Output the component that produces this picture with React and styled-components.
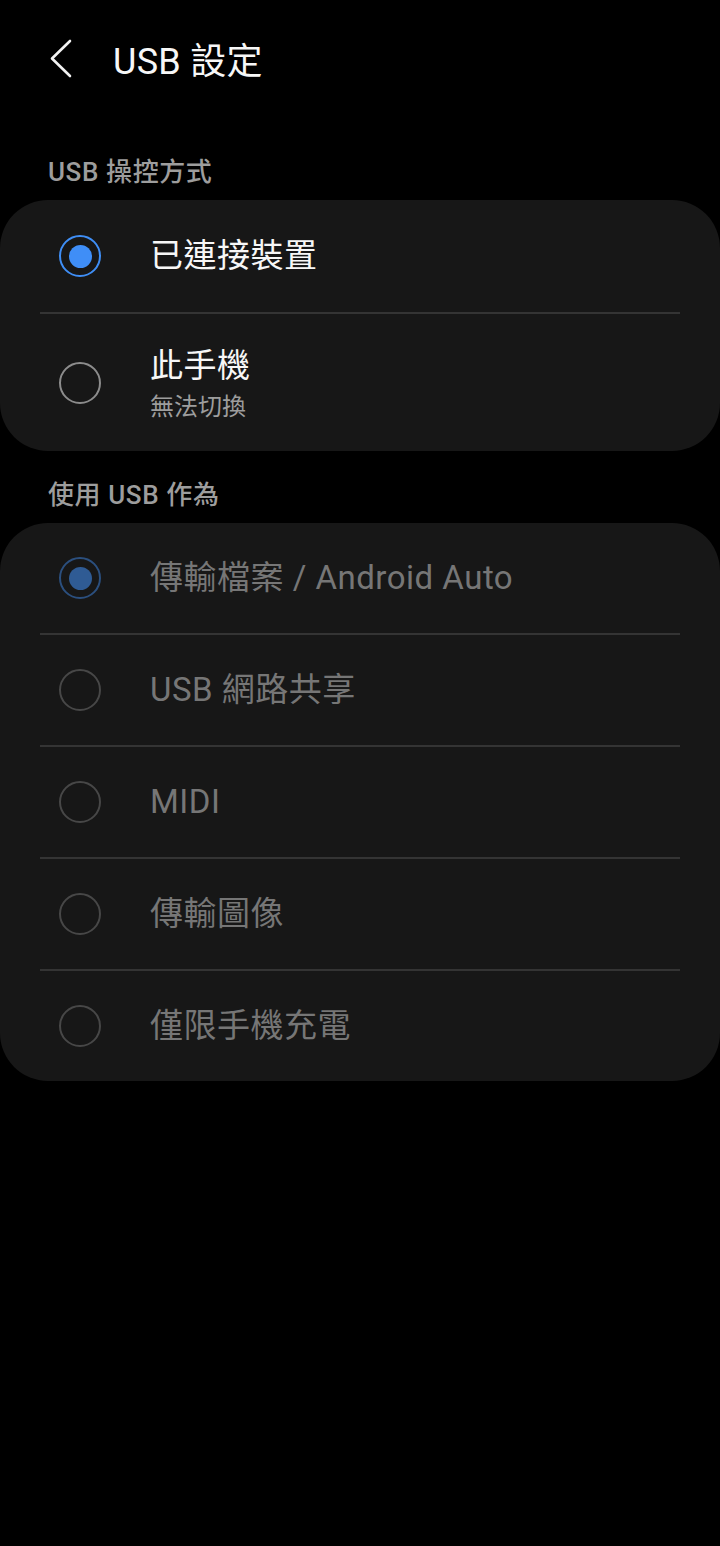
import styled, { createGlobalStyle } from "styled-components";

const GlobalStyle = createGlobalStyle`
  html, body {
    margin: 0;
    padding: 0;
    background: #000;
  }
  body {
    font-family: Roboto, "Noto Sans CJK TC", sans-serif;
    -webkit-font-smoothing: antialiased;
  }
`;

const controlOptions = [
  { label: "已連接裝置", checked: true },
  { label: "此手機", sub: "無法切換" },
];

const usageOptions = [
  { label: "傳輸檔案 / Android Auto", checked: true },
  { label: "USB 網路共享" },
  { label: "MIDI" },
  { label: "傳輸圖像" },
  { label: "僅限手機充電" },
];

const BackIcon = () => (
  <svg width="26" height="40" viewBox="0 0 26 40" fill="none">
    <polyline
      points="22,3 4,20.5 22,38"
      stroke="#f2f2f2"
      strokeWidth="2.6"
      strokeLinecap="round"
      strokeLinejoin="round"
    />
  </svg>
);

const OptionList = ({ items, disabled, rowHeight }) => (
  <Card>
    {items.map((item, i) => (
      <div key={item.label}>
        {i > 0 && <Divider />}
        <Row $height={item.sub ? 137 : rowHeight}>
          <Radio $checked={item.checked} $disabled={disabled} />
          <Texts>
            <Label $disabled={disabled}>{item.label}</Label>
            {item.sub && <Sub>{item.sub}</Sub>}
          </Texts>
        </Row>
      </div>
    ))}
  </Card>
);

export default function App() {
  return (
    <Page>
      <GlobalStyle />
      <Header>
        <BackButton>
          <BackIcon />
        </BackButton>
        <Title>USB 設定</Title>
      </Header>

      <SectionLabel>USB 操控方式</SectionLabel>
      <OptionList items={controlOptions} rowHeight={112} />

      <SectionLabel $gap={28}>使用 USB 作為</SectionLabel>
      <OptionList items={usageOptions} disabled rowHeight={110} />
    </Page>
  );
}

const Page = styled.div`
  width: 720px;
  min-height: 1546px;
  background: #000;
  color: #fafafa;
`;

const Header = styled.header`
  height: 116px;
  display: flex;
  align-items: center;
  padding-left: 48px;
`;

const BackButton = styled.div`
  width: 26px;
  height: 40px;
  display: flex;
  align-items: center;
  justify-content: center;
  margin-right: 39px;
`;

const Title = styled.h1`
  margin: 0;
  font-size: 36px;
  font-weight: 400;
  color: #f7f7f7;
  letter-spacing: 0.3px;
`;

const SectionLabel = styled.div`
  margin: ${(p) => p.$gap ?? 40}px 0 12px;
  padding: 0 48px;
  height: 32px;
  line-height: 32px;
  font-size: 26px;
  font-weight: 500;
  color: #9d9d9d;
  letter-spacing: 0.6px;
`;

const Card = styled.section`
  background: #171717;
  border-radius: 48px;
  overflow: hidden;
`;

const Divider = styled.div`
  height: 2px;
  margin: 0 40px;
  background: #343434;
`;

const Row = styled.div`
  height: ${(p) => p.$height}px;
  display: flex;
  align-items: center;
  padding-left: 59px;
`;

const Radio = styled.span`
  box-sizing: border-box;
  width: 42px;
  height: 42px;
  border-radius: 50%;
  flex-shrink: 0;
  margin-right: 49px;
  display: flex;
  align-items: center;
  justify-content: center;
  border: 2px solid
    ${(p) =>
      p.$checked
        ? p.$disabled
          ? "#2b4f7e"
          : "#3f8ef5"
        : p.$disabled
        ? "#474747"
        : "#8c8c8c"};

  &::after {
    content: "";
    display: ${(p) => (p.$checked ? "block" : "none")};
    width: 23px;
    height: 23px;
    border-radius: 50%;
    background: ${(p) => (p.$disabled ? "#2f5b94" : "#3f8ef7")};
  }
`;

const Texts = styled.div`
  display: flex;
  flex-direction: column;
`;

const Label = styled.div`
  font-size: 33px;
  line-height: 44px;
  color: ${(p) => (p.$disabled ? "#767676" : "#f7f7f7")};
  letter-spacing: 0.5px;
`;

const Sub = styled.div`
  font-size: 24px;
  line-height: 30px;
  margin-top: 4px;
  color: #9d9d9d;
`;
